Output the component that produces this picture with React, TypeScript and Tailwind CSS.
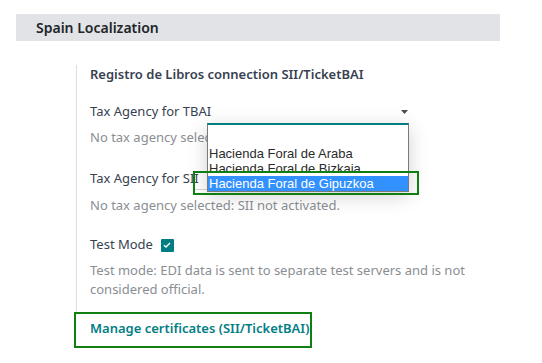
const font = "font-['Noto_Sans','Liberation_Sans',sans-serif]";

function Caret() {
    return (
        <svg width="7" height="4" viewBox="0 0 7 4" className="shrink-0">
            <path d="M0 0H7L3.5 4Z" fill="#4b4f55" />
        </svg>
    );
}

function CheckBox() {
    return (
        <span className="ml-[8px] flex h-[13px] w-[13px] items-center justify-center rounded-[1px] bg-[#017e84]">
            <svg width="8" height="6" viewBox="0 0 8 6">
                <path d="M1 3.2L3 5L7 1" fill="none" stroke="white" strokeWidth="1.4" />
            </svg>
        </span>
    );
}

export default function App() {
    const agencies = ["Hacienda Foral de Araba", "Hacienda Foral de Bizkaia", "Hacienda Foral de Gipuzkoa"];

    return (
        <div className={`relative h-[363px] w-[542px] overflow-hidden bg-white text-[13px] text-[#374151] ${font}`}>
            <div className="mx-[16px] mt-[14px] flex h-[27px] w-[484px] items-center bg-[#e2e3e6] pl-[20px] text-[14px] font-semibold text-[#212529]">
                Spain Localization
            </div>

            <div className="ml-[76px] mt-[24px] border-l border-[#dcdee1] pb-[13px] pl-[13px]">
                <p className="leading-[18px] font-semibold text-[#374151]">Registro de Libros connection SII/TicketBAI</p>

                <div className="mt-[17px] flex h-[23px] items-center">
                    <span className="w-[117px] shrink-0 whitespace-nowrap">Tax Agency for TBAI</span>
                    <div className="flex h-[23px] w-[202px] items-center justify-end pr-[1px]">
                        <Caret />
                    </div>
                </div>
                <p className="mt-[5px] leading-[18px] text-[#8a8e93]">No tax agency selected: TicketBAI not activated.</p>

                <div className="mt-[21px] flex h-[23px] items-center">
                    <span className="w-[103px] shrink-0 whitespace-nowrap">Tax Agency for SII</span>
                    <div className="h-[23px] w-[216px] border-b border-[#d5d7da]" />
                </div>
                <p className="mt-[6px] leading-[18px] text-[#8a8e93]">No tax agency selected: SII not activated.</p>

                <div className="mt-[22px] flex h-[18px] items-center">
                    <span>Test Mode</span>
                    <CheckBox />
                </div>
                <p className="mt-[7px] w-[400px] leading-[19px] text-[#8a8e93]">
                    Test mode: EDI data is sent to separate test servers and is not considered official.
                </p>
            </div>

            <div className="ml-[74px] flex h-[36px] w-[238px] items-center border-2 border-[#0f7f12] pl-[14px] pb-[3px] font-semibold text-[#017e84]">
                Manage certificates (SII/TicketBAI)
            </div>

            <div className="absolute left-[207px] top-[123px] w-[202px] border-x border-b border-t-2 border-x-[#7a7a7a] border-b-[#7a7a7a] border-t-[#017e84] bg-white shadow-[0_4px_18px_rgba(0,0,0,0.18)] font-['Liberation_Sans',sans-serif]">
                <div className="h-[21px]" />
                {agencies.map((a, i) => (
                    <div
                        key={a}
                        className={`h-[15px] whitespace-nowrap pl-[1px] text-[13px] leading-[15px] ${i === 2 ? "bg-[#3390ff] text-white" : "text-[#2b2b2b]"}`}
                    >
                        {a}
                    </div>
                ))}
            </div>

            <div className="absolute left-[193px] top-[171px] h-[24px] w-[226px] border-2 border-[#0f7f12]" />
        </div>
    );
}
